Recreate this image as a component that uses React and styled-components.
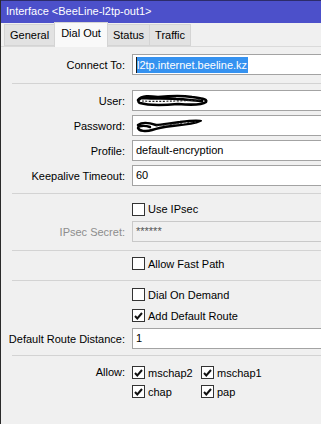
import React from 'react';
import styled, { createGlobalStyle } from 'styled-components';

const Global = createGlobalStyle`
  html, body { margin: 0; padding: 0; background: #f0f0f0; }
  body { font-family: "Liberation Sans", Arial, sans-serif; font-size: 11px; color: #000; }
`;

const Window = styled.div`
  width: 321px;
  height: 424px;
  box-sizing: border-box;
  border-left: 1px solid #2a2a2a;
  background: #f0f0f0;
  overflow: hidden;
  display: flex;
  flex-direction: column;
`;

const TitleBar = styled.div`
  height: 23px;
  box-sizing: border-box;
  border-top: 1px solid #2c2c6a;
  background: #4c50ca;
  color: #fff;
  font-size: 11px;
  line-height: 21px;
  padding-left: 5px;
  white-space: nowrap;
`;

const TabBar = styled.div`
  height: 24px;
  display: flex;
  align-items: flex-end;
  padding-left: 3px;
  border-bottom: 1px solid #dadada;
  box-sizing: border-box;
`;

const Tab = styled.div`
  box-sizing: border-box;
  height: ${p => (p.$active ? 25 : 22)}px;
  margin-bottom: ${p => (p.$active ? -1 : 0)}px;
  padding: 0 ${p => (p.$active ? 6 : 5)}px;
  line-height: 21px;
  font-size: 11px;
  background: ${p => (p.$active ? '#f9f9f9' : '#e2e2e2')};
  border: 1px solid #d4d4d4;
  border-bottom: ${p => (p.$active ? 'none' : '1px solid #d4d4d4')};
  margin-right: -1px;
  position: relative;
  z-index: ${p => (p.$active ? 1 : 0)};
`;

const Form = styled.div`
  display: flex;
  flex-direction: column;
`;

const Row = styled.div`
  display: grid;
  grid-template-columns: 124px 1fr;
  column-gap: 7px;
  align-items: center;
  height: ${p => p.$h || 21}px;
  margin-top: ${p => p.$mt || 0}px;
`;

const Label = styled.div`
  text-align: right;
  white-space: nowrap;
  color: ${p => (p.$disabled ? '#8d8d8d' : '#000')};
`;

const Input = styled.div`
  box-sizing: border-box;
  height: 21px;
  width: 200px;
  border: 1px solid #a3a3a3;
  background: ${p => (p.$disabled ? '#f0f0f0' : '#fff')};
  border-color: ${p => (p.$disabled ? '#c9c9c9' : '#a3a3a3')};
  color: ${p => (p.$disabled ? '#555' : '#000')};
  padding-left: 3px;
  line-height: 19px;
  white-space: nowrap;
  display: flex;
  align-items: center;
`;

const Selected = styled.span`
  background: #3592f0;
  color: #fff;
  line-height: 16px;
  padding-right: 1px;
  border-left: 1px solid #1a1a1a;
`;

const Separator = styled.div`
  height: 1px;
  background: #d3d3d3;
  margin: ${p => p.$mt}px 0 0 11px;
`;

const Check = styled.label`
  display: flex;
  align-items: center;
  gap: 3px;
  white-space: nowrap;
`;

const Box = styled.span`
  width: 13px;
  height: 13px;
  box-sizing: border-box;
  border: 1px solid #333;
  background: #fff;
  display: inline-flex;
  align-items: center;
  justify-content: center;
`;

const Checks = styled.div`
  display: grid;
  grid-template-columns: 69px 69px;
  row-gap: 6px;
`;

const AllowRow = styled.div`
  display: grid;
  grid-template-columns: 124px 1fr;
  column-gap: 7px;
  margin-top: 10px;
`;

const AllowLabel = styled(Label)`
  line-height: 13px;
`;

function CheckBox({ checked, children }) {
  return (
    <Check>
      <Box>
        {checked && (
          <svg width="9" height="8" viewBox="0 0 9 8">
            <path d="M1 4 L3.3 6.5 L8 1" fill="none" stroke="#111" strokeWidth="2" />
          </svg>
        )}
      </Box>
      {children}
    </Check>
  );
}

const UserScribble = () => (
  <svg width="74" height="15" viewBox="0 0 74 15">
    <path
      d="M2 7 C6 2,14 3,22 4 C32 3,44 2,56 4 C64 5,72 6,70 9 C66 12,54 12,42 11 C30 12,14 13,4 10 C1 9,2 5,8 5 C18 6,30 5,40 6 C50 6,60 8,66 8"
      fill="none" stroke="#000" strokeWidth="2.6" strokeLinecap="round"
    />
    <path d="M6 8 C20 9,40 8,64 7" fill="none" stroke="#222" strokeWidth="1.2" strokeDasharray="2 1.5" />
  </svg>
);

const PassScribble = () => (
  <svg width="66" height="14" viewBox="0 0 66 14">
    <path
      d="M2 6 C6 3,14 4,20 6 C26 6,34 4,44 3 C52 2,60 1,64 2 C58 5,46 6,36 7 C28 8,22 9,16 11 C10 13,3 12,2 9 C2 7,8 6,14 8"
      fill="none" stroke="#000" strokeWidth="2.4" strokeLinecap="round"
    />
    <path d="M20 7 C32 6,46 4,60 3" fill="none" stroke="#333" strokeWidth="1" strokeDasharray="2 1.5" />
  </svg>
);

export default function App() {
  return (
    <Window>
      <Global />
      <TitleBar>Interface &lt;BeeLine-l2tp-out1&gt;</TitleBar>
      <TabBar>
        <Tab>General</Tab>
        <Tab $active>Dial Out</Tab>
        <Tab>Status</Tab>
        <Tab>Traffic</Tab>
      </TabBar>
      <Form>
        <Row $mt={7}>
          <Label>Connect To:</Label>
          <Input><Selected>l2tp.internet.beeline.kz</Selected></Input>
        </Row>
        <Separator $mt={8} />
        <Row $mt={6}>
          <Label>User:</Label>
          <Input><UserScribble /></Input>
        </Row>
        <Row $mt={4}>
          <Label>Password:</Label>
          <Input><PassScribble /></Input>
        </Row>
        <Row $mt={4}>
          <Label>Profile:</Label>
          <Input>default-encryption</Input>
        </Row>
        <Row $mt={4}>
          <Label>Keepalive Timeout:</Label>
          <Input>60</Input>
        </Row>
        <Separator $mt={7} />
        <Row $mt={5} $h={20}>
          <span />
          <CheckBox>Use IPsec</CheckBox>
        </Row>
        <Row $mt={2}>
          <Label $disabled>IPsec Secret:</Label>
          <Input $disabled>******</Input>
        </Row>
        <Separator $mt={8} />
        <Row $mt={2}>
          <span />
          <CheckBox>Allow Fast Path</CheckBox>
        </Row>
        <Separator $mt={6} />
        <Row $mt={3}>
          <span />
          <CheckBox>Dial On Demand</CheckBox>
        </Row>
        <Row>
          <span />
          <CheckBox checked>Add Default Route</CheckBox>
        </Row>
        <Row $mt={2}>
          <Label>Default Route Distance:</Label>
          <Input>1</Input>
        </Row>
        <Separator $mt={6} />
        <AllowRow>
          <AllowLabel>Allow:</AllowLabel>
          <Checks>
            <CheckBox checked>mschap2</CheckBox>
            <CheckBox checked>mschap1</CheckBox>
            <CheckBox checked>chap</CheckBox>
            <CheckBox checked>pap</CheckBox>
          </Checks>
        </AllowRow>
      </Form>
    </Window>
  );
}
